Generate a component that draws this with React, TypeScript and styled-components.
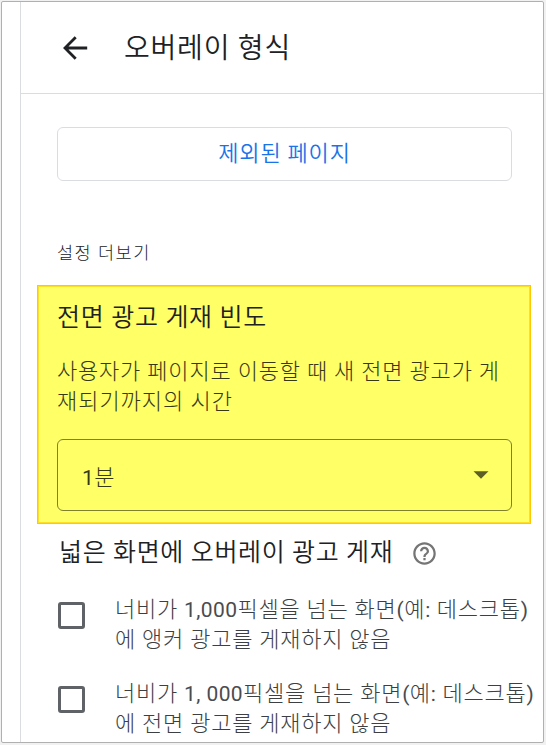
import React from "react";
import styled, { createGlobalStyle } from "styled-components";

const GlobalStyle = createGlobalStyle`
  * { box-sizing: border-box; }
  body {
    margin: 0;
    background: #f1f1f1;
    font-family: Roboto, "Noto Sans CJK KR", sans-serif;
    font-weight: 300;
    color: #202124;
  }
`;

const Frame = styled.main`
  width: 546px;
  height: 745px;
  padding: 1px 2px 2px 1px;
  overflow: hidden;
`;

const Sheet = styled.div`
  height: 742px;
  display: flex;
  background: #fff;
  border: 1px solid #b0b0b0;
  border-radius: 2px;
  overflow: hidden;
`;

const Gutter = styled.div`
  flex: 0 0 19px;
  border-right: 1px solid #dadce0;
`;

const Panel = styled.section`
  flex: 1;
  min-width: 0;
`;

const Header = styled.header`
  height: 92px;
  display: flex;
  align-items: center;
  padding: 0 0 1px 41px;
  border-bottom: 1px solid #dadce0;
`;

const BackButton = styled.button`
  display: flex;
  width: 28px;
  height: 28px;
  margin: 2px 34px 0 0;
  padding: 0;
  border: 0;
  background: none;
  color: #202124;
`;

const Line = styled.span<{ $size: number; $spacing: number }>`
  display: block;
  white-space: pre;
  font-size: ${(p) => p.$size}px;
  letter-spacing: ${(p) => p.$spacing}px;
`;

const Title = styled.h1`
  margin: 3px 0 0;
  font-weight: 350;
  line-height: 40px;
`;

const Content = styled.div`
  padding: 33px 12px 0 16px;
`;

const ExcludedButton = styled.button`
  display: flex;
  justify-content: center;
  width: 455px;
  height: 54px;
  margin-left: 20px;
  padding: 0;
  border: 1px solid #dadce0;
  border-radius: 6px;
  background: #fff;
  color: #1a73e8;
  font: inherit;
  font-weight: 350;
  line-height: 52px;
`;

const MoreLabel = styled.div`
  height: 24px;
  margin: 60px 0 20px 20px;
  line-height: 24px;
  color: #202124;
`;

const Highlight = styled.section`
  width: 494px;
  height: 239px;
  padding: 15px 18px 0 19px;
  background: #ffff66;
  border: 1px solid #ffc800;
  box-shadow: inset 0 0 0 1px #ffdf25;
`;

const Heading = styled.h2`
  margin: 0;
  font-weight: 350;
  line-height: 34px;
`;

const Description = styled.p`
  margin: 22px 0 22px;
  line-height: 30px;
  color: #36381a;
`;

const Select = styled.div`
  display: flex;
  justify-content: space-between;
  align-items: center;
  width: 455px;
  height: 72px;
  padding: 0 22px 0 24px;
  border: 1px solid #80802f;
  border-radius: 6px;
  color: #36381a;
`;

const HeadingRow = styled.div`
  display: flex;
  align-items: center;
  gap: 18px;
  height: 34px;
  margin: 12px 0 25px 22px;
`;

const Option = styled.label`
  display: flex;
  height: 60px;
  margin: 0 0 24px 21px;
  line-height: 30px;
  color: #3c4043;
`;

const Box = styled.span`
  flex: none;
  width: 27px;
  height: 27px;
  margin: 7px 30px 0 0;
  border: 3px solid #5f6368;
  border-radius: 3px;
`;

const Latin = styled.span`
  font-size: 21px;
  letter-spacing: 0.4px;
  font-weight: 400;
  color: #494c50;
`;

const SelectDigit = styled(Latin)`
  color: inherit;
`;

const BackArrow = () => (
  <svg width="28" height="28" viewBox="0 0 28 28" fill="none" stroke="currentColor" strokeWidth="2.8">
    <path d="M25.2 14H4M13.7 3.3 3 14l10.7 10.7" />
  </svg>
);

const Caret = () => (
  <svg width="16" height="8" viewBox="0 0 16 8">
    <path d="M0.5 0.2h15L8 7.8z" fill="#5e5f27" />
  </svg>
);

const HelpIcon = () => (
  <svg width="27" height="27" viewBox="0 0 24 24" fill="#757575">
    <path d="M11 18h2v-2h-2v2zm1-16C6.48 2 2 6.48 2 12s4.48 10 10 10 10-4.48 10-10S17.52 2 12 2zm0 18c-4.41 0-8-3.59-8-8s3.59-8 8-8 8 3.59 8 8-3.59 8-8 8zm0-14c-2.21 0-4 1.79-4 4h2c0-1.1.9-2 2-2s2 .9 2 2c0 2-3 1.75-3 5h2c0-2.25 3-2.5 3-5 0-2.21-1.79-4-4-4z" />
  </svg>
);

const options = [
  { amount: "1,000", second: "에 앵커 광고를 게재하지 않음" },
  { amount: "1, 000", second: "에 전면 광고를 게재하지 않음" },
];

export default function App() {
  return (
    <>
      <GlobalStyle />
      <Frame>
        <Sheet>
          <Gutter />
          <Panel>
            <Header>
              <BackButton aria-label="뒤로">
                <BackArrow />
              </BackButton>
              <Title>
                <Line $size={28} $spacing={0.8}>오버레이 형식</Line>
              </Title>
            </Header>
            <Content>
              <ExcludedButton>
                <Line $size={22} $spacing={0.8}>제외된 페이지</Line>
              </ExcludedButton>
              <MoreLabel>
                <Line $size={17.5} $spacing={1.5}>설정 더보기</Line>
              </MoreLabel>
              <Highlight>
                <Heading>
                  <Line $size={25} $spacing={0.7}>전면 광고 게재 빈도</Line>
                </Heading>
                <Description>
                  <Line $size={22} $spacing={0.8}>사용자가 페이지로 이동할 때 새 전면 광고가 게</Line>
                  <Line $size={22} $spacing={0.95}>재되기까지의 시간</Line>
                </Description>
                <Select>
                  <Line $size={22} $spacing={0.8}>
                    <SelectDigit>1</SelectDigit>분
                  </Line>
                  <Caret />
                </Select>
              </Highlight>
              <HeadingRow>
                <Heading>
                  <Line $size={25} $spacing={0.65}>넓은 화면에 오버레이 광고 게재</Line>
                </Heading>
                <HelpIcon />
              </HeadingRow>
              {options.map((o) => (
                <Option key={o.amount}>
                  <Box />
                  <span>
                    <Line $size={22} $spacing={0.75}>
                      너비가 <Latin>{o.amount}</Latin>픽셀을 넘는 화면<Latin>(</Latin>예<Latin>:</Latin> 데스크톱<Latin>)</Latin>
                    </Line>
                    <Line $size={22} $spacing={0.75}>{o.second}</Line>
                  </span>
                </Option>
              ))}
            </Content>
          </Panel>
        </Sheet>
      </Frame>
    </>
  );
}
